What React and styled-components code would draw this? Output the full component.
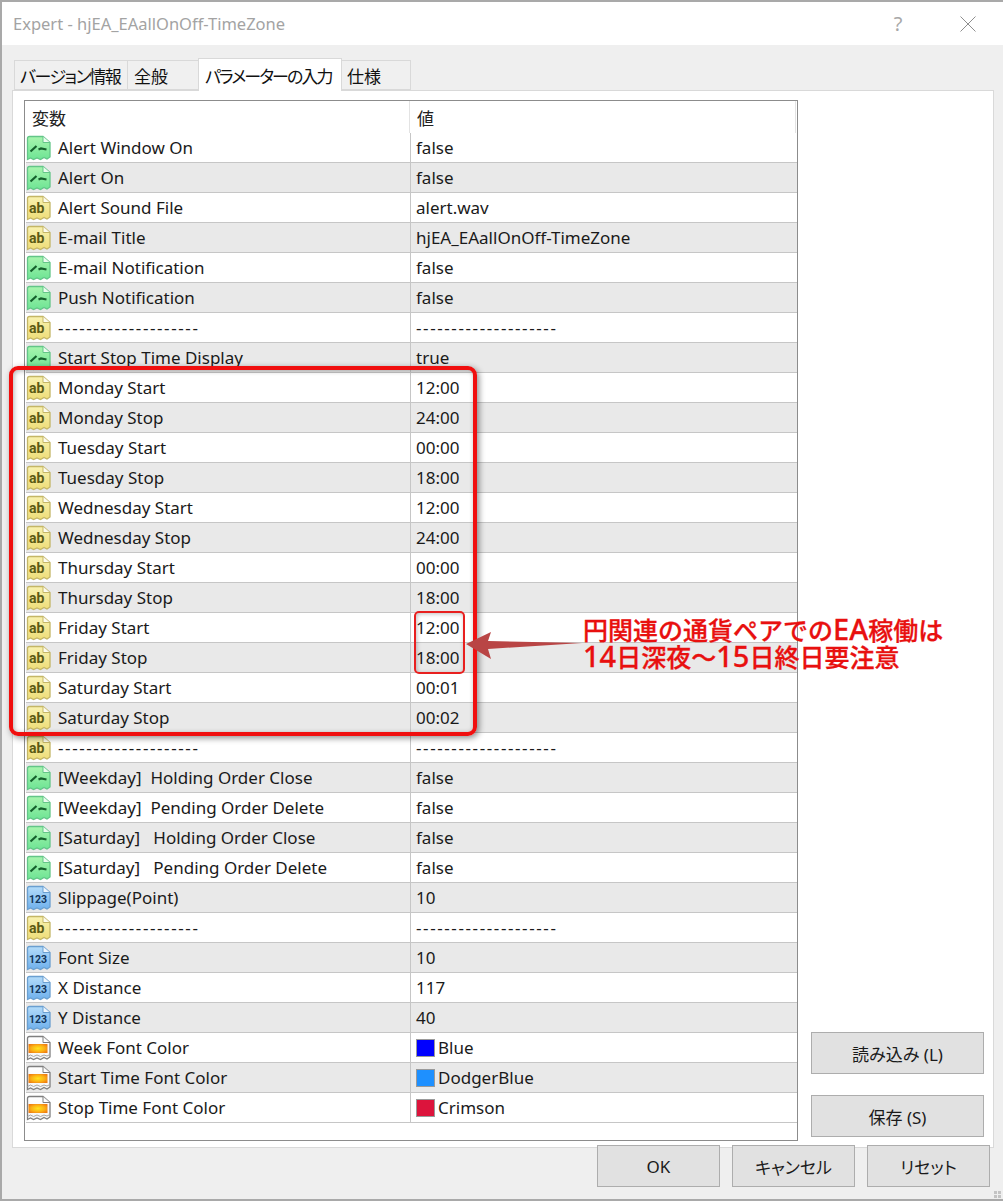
import React, { useId } from 'react';
import styled, { createGlobalStyle } from 'styled-components';

const GlobalStyle = createGlobalStyle`
  html, body { margin: 0; padding: 0; background: #fff; }
  body {
    font-family: "Noto Sans", "Noto Sans CJK JP", sans-serif;
    font-feature-settings: "palt";
  }
`;

const Window = styled.div`
  position: relative;
  width: 1003px;
  height: 1201px;
  box-sizing: border-box;
  overflow: hidden;
  display: flex;
  flex-direction: column;
  background: #efefef;
  border-top: 2px solid #a9a9a9;
  border-bottom: 2px solid #a9a9a9;
  border-left: 2px solid #a9a9a9;
`;

const TitleBar = styled.div`
  height: 43px;
  flex: none;
  display: flex;
  align-items: center;
  padding: 0 27px 0 11px;
  background: #fff;
  color: #a3a3a3;
  font-size: 16.5px;
`;

const TitleText = styled.div`
  flex: 1;
`;

const Help = styled.span`
  width: 20px;
  margin-right: 52px;
  text-align: center;
  font-size: 20px;
  color: #a8a8a8;
`;

const Tabs = styled.div`
  display: flex;
  align-items: flex-end;
  height: 45px;
  flex: none;
  padding-left: 12px;
`;

const Tab = styled.div`
  box-sizing: border-box;
  width: ${p => p.$w}px;
  height: ${p => (p.$active ? 33 : 30)}px;
  margin-bottom: ${p => (p.$active ? -1 : 0)}px;
  padding-left: ${p => p.$pad}px;
  display: flex;
  align-items: center;
  position: relative;
  z-index: ${p => (p.$active ? 1 : 0)};
  background: ${p => (p.$active ? '#fff' : '#f0f0f0')};
  border: 1px solid #d9d9d9;
  border-bottom: ${p => (p.$active ? 'none' : '1px solid #d9d9d9')};
  margin-right: -1px;
  font-size: 17px;
  letter-spacing: ${p => p.$ls || 0}px;
  white-space: nowrap;
  color: #111;
`;

const Panel = styled.div`
  box-sizing: border-box;
  width: 982px;
  height: 1058px;
  flex: none;
  margin-left: 10px;
  padding: 9px 9px 10px 11px;
  display: flex;
  background: #fff;
  border: 1px solid #d9d9d9;
`;

const Table = styled.div`
  box-sizing: border-box;
  width: 774px;
  height: 1041px;
  flex: none;
  border: 1px solid #8c8c8c;
`;

const HeaderRow = styled.div`
  display: grid;
  grid-template-columns: 385px 386px;
  height: 32px;
  font-size: 17px;
  color: #222;
`;

const HeaderCell = styled.div`
  display: flex;
  align-items: center;
  padding-left: ${p => p.$pad}px;
  border-right: 1px solid #e3e3e3;
`;

const Row = styled.div`
  box-sizing: border-box;
  display: grid;
  grid-template-columns: 385px 385px;
  height: 30px;
  margin-left: 1px;
  background: ${p => (p.$alt ? '#e9e9e9' : '#fff')};
  border-bottom: 1px solid #c6c6c6;
  font-size: 17px;
  color: #1a1a1a;
`;

const NameCell = styled.div`
  display: flex;
  align-items: center;
  gap: 7px;
  padding-left: 1px;
  margin-left: -1px;
  border-right: 1px solid #c6c6c6;
  white-space: pre;
`;

const ValueCell = styled.div`
  display: flex;
  align-items: center;
  padding-left: 5px;
  white-space: pre;
`;

const Dashes = styled.span`
  letter-spacing: 1.6px;
`;

const Swatch = styled.span`
  box-sizing: border-box;
  width: 19px;
  height: 18px;
  margin-right: 3px;
  background: ${p => p.$color};
  border: 1px solid #9a9a9a;
`;

const Side = styled.div`
  flex: 1;
  display: flex;
  flex-direction: column;
  justify-content: flex-end;
  align-items: flex-end;
  gap: 21px;
`;

const Button = styled.button`
  box-sizing: border-box;
  width: ${p => p.$w}px;
  height: 42px;
  padding: 0;
  background: #e1e1e1;
  border: 1px solid #adadad;
  font-family: inherit;
  font-feature-settings: inherit;
  font-size: 17px;
  color: #1a1a1a;
`;

const Footer = styled.div`
  position: relative;
  display: flex;
  justify-content: flex-end;
  gap: 12px;
  margin-top: -3px;
  padding-right: 13px;
`;

const Grip = styled.div`
  position: absolute;
  right: 2px;
  bottom: 1px;
  display: grid;
  grid-template-columns: 3px 3px;
  gap: 1px;
  i { width: 3px; height: 3px; background: #c4c4c4; }
`;

const RedFrame = styled.div`
  position: absolute;
  left: 7px;
  top: 364px;
  width: 460px;
  height: 362px;
  border: 4px solid #f00f0f;
  border-radius: 9px;
  box-shadow: 2px 2px 6px rgba(0, 0, 0, 0.45), inset 1px 1px 5px rgba(0, 0, 0, 0.3);
  pointer-events: none;
`;

const SmallFrame = styled.div`
  position: absolute;
  left: 412px;
  top: 609px;
  width: 47px;
  height: 59px;
  border: 2px solid #e8201f;
  border-radius: 5px;
  box-shadow: inset 1px 1px 4px rgba(0, 0, 0, 0.25);
  pointer-events: none;
`;

const Arrow = styled.svg`
  position: absolute;
  left: 464px;
  top: 626px;
`;

const Callout = styled.div`
  position: absolute;
  left: 581px;
  top: 614px;
  font-size: 25px;
  line-height: 25px;
  font-weight: 500;
  color: #e8100f;
  -webkit-text-stroke: 0.3px #e8100f;
  white-space: nowrap;
  font-feature-settings: normal;
`;

const Latin = styled.span`
  font-size: 29px;
  line-height: 25px;
`;

const TINTS = {
  bool: { top: '#a8f5ae', bottom: '#6ee494', stroke: '#63c588' },
  str: { top: '#f9f2b0', bottom: '#eedd78', stroke: '#c4b666' },
  num: { top: '#b4dcfa', bottom: '#6fb0ec', stroke: '#6a9fd0' },
  color: { top: '#ffffff', bottom: '#f4f4f4', stroke: '#7f7f7f' },
};

const ParamIcon = ({ kind }) => {
  const id = useId();
  const tint = TINTS[kind];
  return (
    <svg width="25" height="26" viewBox="0 0 25 26" style={{ flex: 'none' }}>
      <defs>
        <linearGradient id={id} x1="0" y1="0" x2="0" y2="1">
          <stop offset="0" stopColor={tint.top} />
          <stop offset="1" stopColor={tint.bottom} />
        </linearGradient>
        <radialGradient id={id + 'o'} cx="0.5" cy="0.5" r="0.6">
          <stop offset="0" stopColor="#ffe41e" />
          <stop offset="0.6" stopColor="#fbb114" />
          <stop offset="1" stopColor="#ef7c12" />
        </radialGradient>
      </defs>
      <path
        d="M1.5 3.5Q1.5 1.5 3.5 1.5H17L24 7.5V22L21 24 18 22.5 14.5 24.5 11 23 7.5 24.5 4.5 23 1.5 24.5Z"
        fill={`url(#${id})`}
        stroke={tint.stroke}
        strokeWidth="1.3"
      />
      <path d="M17 1.5V7.5H24" fill="#fff" fillOpacity="0.8" stroke={tint.stroke} strokeWidth="1" />
      {kind === 'bool' && (
        <path d="M4.5 16.5L10.5 11M12.5 14.5L15 13.5 20.5 14.5" fill="none" stroke="#15602c" strokeWidth="2.2" />
      )}
      {kind === 'str' && (
        <text x="3" y="18" fontFamily="Roboto, sans-serif" fontSize="14" fontWeight="700" fill="#5c5a14">ab</text>
      )}
      {kind === 'num' && (
        <text x="3" y="17.5" fontFamily="Roboto, sans-serif" fontSize="10.5" fontWeight="700" fill="#12365c">123</text>
      )}
      {kind === 'color' && (
        <>
          <rect x="2.5" y="9" width="19" height="9" fill={`url(#${id}o)`} />
          <path d="M1.5 21.5L4.5 20 7.5 21.5 11 20 14.5 21.5 18 20 21 21 24 19.5" fill="none" stroke="#a8a8a8" />
        </>
      )}
    </svg>
  );
};

const DASH = '--------------------';

const PARAMS = [
  ['bool', 'Alert Window On', 'false'],
  ['bool', 'Alert On', 'false'],
  ['str', 'Alert Sound File', 'alert.wav'],
  ['str', 'E-mail Title', 'hjEA_EAallOnOff-TimeZone'],
  ['bool', 'E-mail Notification', 'false'],
  ['bool', 'Push Notification', 'false'],
  ['str', DASH, DASH],
  ['bool', 'Start Stop Time Display', 'true'],
  ['str', 'Monday Start', '12:00'],
  ['str', 'Monday Stop', '24:00'],
  ['str', 'Tuesday Start', '00:00'],
  ['str', 'Tuesday Stop', '18:00'],
  ['str', 'Wednesday Start', '12:00'],
  ['str', 'Wednesday Stop', '24:00'],
  ['str', 'Thursday Start', '00:00'],
  ['str', 'Thursday Stop', '18:00'],
  ['str', 'Friday Start', '12:00'],
  ['str', 'Friday Stop', '18:00'],
  ['str', 'Saturday Start', '00:01'],
  ['str', 'Saturday Stop', '00:02'],
  ['str', DASH, DASH],
  ['bool', '[Weekday]  Holding Order Close', 'false'],
  ['bool', '[Weekday]  Pending Order Delete', 'false'],
  ['bool', '[Saturday]   Holding Order Close', 'false'],
  ['bool', '[Saturday]   Pending Order Delete', 'false'],
  ['num', 'Slippage(Point)', '10'],
  ['str', DASH, DASH],
  ['num', 'Font Size', '10'],
  ['num', 'X Distance', '117'],
  ['num', 'Y Distance', '40'],
  ['color', 'Week Font Color', 'Blue', '#0000ff'],
  ['color', 'Start Time Font Color', 'DodgerBlue', '#1e90ff'],
  ['color', 'Stop Time Font Color', 'Crimson', '#dc143c'],
];

const Label = ({ text }) => (text === DASH ? <Dashes>{text}</Dashes> : text);

const App = () => {
  return (
    <>
      <GlobalStyle />
      <Window>
        <TitleBar>
          <TitleText>Expert - hjEA_EAallOnOff-TimeZone</TitleText>
          <Help>?</Help>
          <svg width="16" height="16" viewBox="0 0 16 16">
            <path d="M.5.5l15 15M15.5.5l-15 15" stroke="#8e8e8e" strokeWidth="1" fill="none" />
          </svg>
        </TitleBar>
        <Tabs>
          <Tab $w={114} $pad={5} $ls={-1.5}>バージョン情報</Tab>
          <Tab $w={72} $pad={6}>全般</Tab>
          <Tab $w={144} $pad={6} $ls={-1.9} $active>パラメーターの入力</Tab>
          <Tab $w={70} $pad={5}>仕様</Tab>
        </Tabs>
        <Panel>
          <Table>
            <HeaderRow>
              <HeaderCell $pad={7}>変数</HeaderCell>
              <HeaderCell $pad={7}>値</HeaderCell>
            </HeaderRow>
            {PARAMS.map(([kind, name, value, color], i) => (
              <Row key={i} $alt={i % 2 === 1}>
                <NameCell>
                  <ParamIcon kind={kind} />
                  <Label text={name} />
                </NameCell>
                <ValueCell>
                  {color && <Swatch $color={color} />}
                  <Label text={value} />
                </ValueCell>
              </Row>
            ))}
          </Table>
          <Side>
            <Button $w={173}>読み込み (L)</Button>
            <Button $w={173}>保存 (S)</Button>
          </Side>
        </Panel>
        <Footer>
          <Button $w={123}>OK</Button>
          <Button $w={123}>キャンセル</Button>
          <Button $w={123}>リセット</Button>
        </Footer>
        <Grip><i /><i /><i /><i /></Grip>
        <RedFrame />
        <SmallFrame />
        <Arrow width="118" height="36" viewBox="0 0 118 36">
          <path d="M0 16L25 4 22 13 116 15 22 21 25 31Z" fill="#b94545" />
        </Arrow>
        <Callout>
          円関連の通貨ペアでの<Latin>EA</Latin>稼働は
          <br />
          <Latin>14</Latin>日深夜～<Latin>15</Latin>日終日要注意
        </Callout>
      </Window>
    </>
  );
};

export default App;
